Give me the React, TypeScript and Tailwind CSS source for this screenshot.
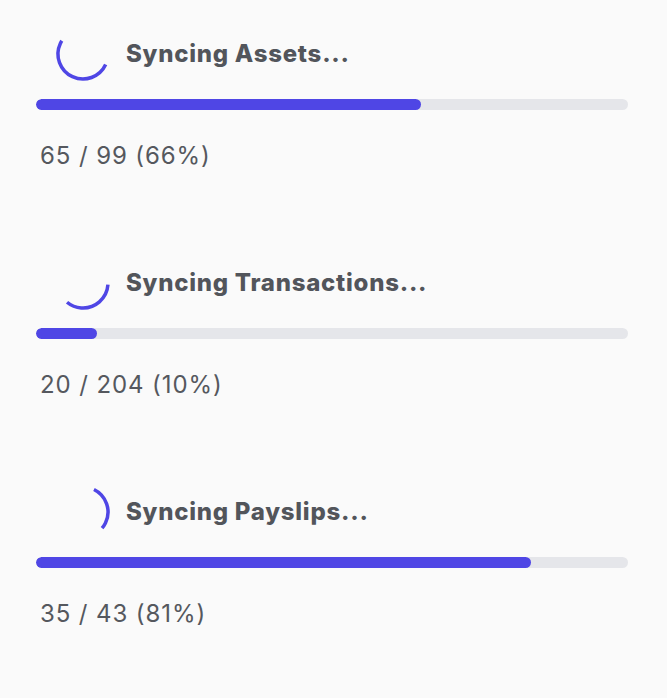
import React from 'react';

type SyncItem = {
    label: string;
    done: number;
    total: number;
    bar: number; // width of fill, percent
    arcStart: number; // degrees, clockwise from 3 o'clock
    arcSpan: number;
};

const items: SyncItem[] = [
    { label: 'Syncing Assets...', done: 65, total: 99, bar: 65, arcStart: 25, arcSpan: 186 },
    { label: 'Syncing Transactions...', done: 20, total: 204, bar: 10.3, arcStart: 4, arcSpan: 125 },
    { label: 'Syncing Payslips...', done: 35, total: 43, bar: 83.6, arcStart: 296, arcSpan: 104 },
];

const R = 25;
const CIRC = 2 * Math.PI * R;

const Spinner: React.FC<{ start: number; span: number }> = ({ start, span }) => (
    <svg width="60" height="60" viewBox="0 0 60 60" className="shrink-0">
        <circle
            cx="30"
            cy="30"
            r={R}
            fill="none"
            stroke="#4f46e5"
            strokeWidth="3.5"
            strokeDasharray={`${(span / 360) * CIRC} ${CIRC}`}
            transform={`rotate(${start} 30 30)`}
        />
    </svg>
);

const SyncRow: React.FC<{ item: SyncItem }> = ({ item }) => {
    const pct = Math.round((item.done / item.total) * 100);
    return (
        <div className="flex flex-col">
            <div className="flex items-center h-[60px]">
                <div className="ml-[17px] mr-[13px]">
                    <Spinner start={item.arcStart} span={item.arcSpan} />
                </div>
                <h2 className="text-[24px] font-extrabold text-[#52555b] leading-8 tracking-[0.75px]">{item.label}</h2>
            </div>
            <div className="mt-[15px] h-[11px] w-full rounded-full bg-[#e5e6ea] overflow-hidden">
                <div className="h-full rounded-full bg-[#4f46e5]" style={{ width: `${item.bar}%` }} />
            </div>
            <p className="mt-[30px] ml-1 text-[24px] leading-8 text-[#55585e] tracking-[0.9px]">
                {item.done} / {item.total} ({pct}%)
            </p>
        </div>
    );
};

const App: React.FC = () => {
    return (
        <div className="min-h-[698px] bg-[#fafafa] pl-9 pr-[39px] pt-6 font-['Inter',sans-serif]">
            <div className="flex flex-col gap-[81px]">
                {items.map(item => (
                    <SyncRow key={item.label} item={item} />
                ))}
            </div>
        </div>
    );
};

export default App;
